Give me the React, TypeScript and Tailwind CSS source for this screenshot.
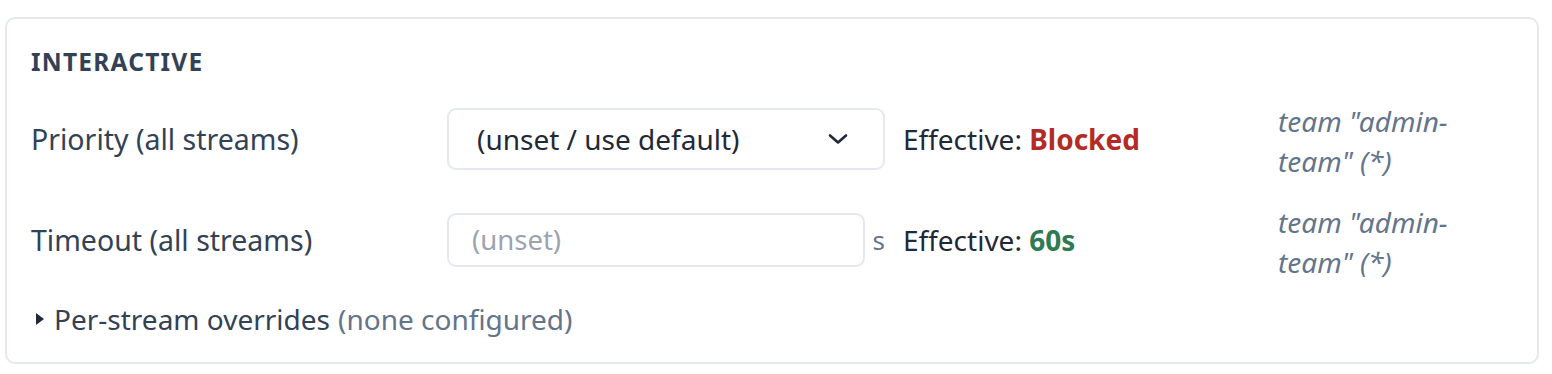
import React from "react";

function Chevron() {
  return (
    <svg width="22" height="14" viewBox="0 0 22 14" fill="none" className="shrink-0">
      <path d="M3 3.5 L11 10.5 L19 3.5" stroke="#1f2937" strokeWidth="2.6" strokeLinecap="round" strokeLinejoin="round" />
    </svg>
  );
}

function Source() {
  return (
    <div className="w-[186px] pt-[4px] italic text-[28px] leading-[40px] text-[#64748b]">
      team "admin-team" (*)
    </div>
  );
}

export default function App() {
  return (
    <div className="w-[1552px] h-[374px] bg-white pt-[17px] pl-[5px]" style={{ fontFamily: '"Noto Sans", "Open Sans", sans-serif' }}>
      <div className="w-[1534px] h-[347px] border-2 border-[#e5e9ef] rounded-[10px] px-[24px] pt-[24px] pb-[22px]">
        <div className="text-[24.5px] leading-[37px] font-bold tracking-[0.05em] text-[#334155]">INTERACTIVE</div>
        <div className="mt-[19px] flex flex-col gap-[21px]">
          <div className="flex items-center h-[80px]">
            <div className="w-[416px] text-[28.5px] leading-[42px] text-[#334155]">Priority (all streams)</div>
            <div className="w-[438px] h-[62px] border-2 border-[#e5e9ef] rounded-[9px] flex items-center justify-between pl-[28px] pr-[34px] text-[28px] text-[#1f2937]">
              <span>(unset / use default)</span>
              <Chevron />
            </div>
            <div className="ml-[18px] w-[357px] text-[28px] leading-[42px] text-[#1f2937]">
              Effective: <span className="font-bold text-[#b42b26]">Blocked</span>
            </div>
            <div className="ml-[18px]">
              <Source />
            </div>
          </div>
          <div className="flex items-center h-[80px]">
            <div className="w-[416px] text-[28.5px] leading-[42px] text-[#334155]">Timeout (all streams)</div>
            <div className="w-[438px] flex items-center">
              <div className="w-[418px] h-[54px] border-2 border-[#e5e9ef] rounded-[9px] flex items-center pl-[23px] text-[27.5px] text-[#9ca3af]">
                (unset)
              </div>
              <span className="ml-[8px] text-[26px] text-[#64748b]">s</span>
            </div>
            <div className="ml-[18px] w-[357px] text-[28px] leading-[42px] text-[#1f2937]">
              Effective: <span className="font-bold text-[#2f7a52]">60s</span>
            </div>
            <div className="ml-[18px]">
              <Source />
            </div>
          </div>
        </div>
        <div className="mt-[18px] flex items-center text-[28px] leading-[42px]">
          <svg width="8" height="12" viewBox="0 0 8 12" className="ml-[5px] mr-[10px]">
            <path d="M0 0 L8 6 L0 12 Z" fill="#1f2937" />
          </svg>
          <span className="text-[#334155]">Per-stream overrides</span>
          <span className="ml-[8px] text-[#64748b]">(none configured)</span>
        </div>
      </div>
    </div>
  );
}
